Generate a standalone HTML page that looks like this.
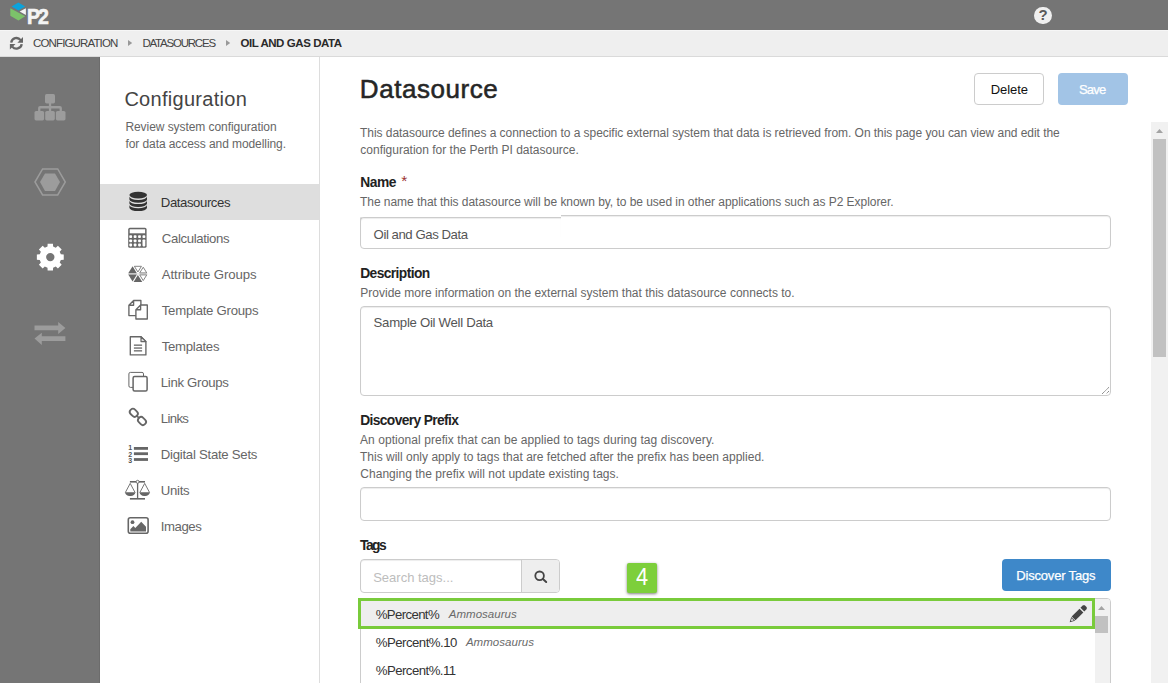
<!DOCTYPE html>
<html lang="en">
<head>
<meta charset="utf-8">
<title>Datasource - Configuration</title>
<style>
*{box-sizing:border-box;margin:0;padding:0}
html,body{width:1168px;height:683px;overflow:hidden;background:#fff}
body{font-family:"Liberation Sans",sans-serif;color:#333;position:relative}
.abs{position:absolute}
svg{position:absolute;overflow:visible}
#hdr{left:0;top:0;width:1168px;height:30px;background:#757575}
#crumb{left:0;top:30px;width:1168px;height:27px;background:#efefef;border-top:1px solid #f6f6f6;border-bottom:1px solid #dadada}
#rail{left:0;top:57px;width:100px;height:626px;background:#757575;border-right:1px solid #6c6c6c}
#side{left:100px;top:57px;width:220px;height:626px;background:#fff;border-right:1px solid #ddd}
.t{position:absolute;white-space:nowrap;line-height:1}
.req{color:#9c3331;font-weight:normal;font-size:15.5px;margin-left:5.4px;letter-spacing:0;position:relative;top:-.5px;line-height:0}
.navsel{left:100px;top:184px;width:219px;height:36px;background:#dedede}
.inp{position:absolute;left:360px;width:751px;border:1px solid #ccc;border-radius:4px;background:#fff}
</style>
</head>
<body>
<div id="hdr" class="abs"></div>
<div id="crumb" class="abs"></div>
<div id="rail" class="abs"></div>
<div id="side" class="abs"></div>
<div class="abs navsel"></div>

<!-- logo -->
<svg style="left:0;top:0" width="60" height="30" viewBox="0 0 60 30">
 <polygon points="11.6,6.6 18.4,2.6 25.2,6.6 18.4,10.5" fill="#0ba3dc"/>
 <polygon points="10.3,8.3 25.2,16.3 18.4,20.4 10.3,15.8" fill="#7cc26a"/>
 <polygon points="19.7,11.6 25.9,8.3 25.9,14.9" fill="#f4f4f4"/>
</svg>
<div class="t" id="logo" style="left:27.4px;top:6.2px;font-size:21.6px;font-weight:bold;color:#f4f4f4;-webkit-text-stroke:.7px #f4f4f4;letter-spacing:-2.1px;transform:scaleX(.9);transform-origin:0 0">P2</div>

<!-- help -->
<div class="abs" style="left:1034.3px;top:6.5px;width:17.4px;height:17.4px;border-radius:50%;background:#f0f0f0"></div>
<div class="t" id="q" style="left:1038.6px;top:7.4px;font-size:15px;font-weight:bold;color:#5a5a5a">?</div>

<!-- refresh icon -->
<svg style="left:9px;top:36px" width="15" height="15" viewBox="0 0 15 15">
 <path d="M2.2 6.6 A5.3 5.3 0 0 1 11.63 4.09" fill="none" stroke="#666" stroke-width="2.3"/>
 <polygon points="14,1.1 14,6.7 8.4,6.7" fill="#666"/>
 <path d="M12.7 8.09 A5.3 5.3 0 0 1 3.27 10.61" fill="none" stroke="#666" stroke-width="2.3"/>
 <polygon points="0.9,13.6 0.9,8 6.5,8" fill="#666"/>
</svg>
<!-- crumb arrows -->
<svg style="left:128px;top:40px" width="5" height="6" viewBox="0 0 5 6"><polygon points="0,0 4.2,3 0,6" fill="#999"/></svg>
<svg style="left:226px;top:40px" width="5" height="6" viewBox="0 0 5 6"><polygon points="0,0 4.2,3 0,6" fill="#999"/></svg>

<!-- rail icons -->
<svg style="left:0;top:57px" width="100" height="320" viewBox="0 57 100 320">
 <g fill="#9c9c9c">
  <rect x="45" y="94" width="10" height="9.4" rx="1.6"/>
  <rect x="34.5" y="111" width="9.6" height="9.4" rx="1.6"/>
  <rect x="45.2" y="111" width="9.6" height="9.4" rx="1.6"/>
  <rect x="55.9" y="111" width="9.6" height="9.4" rx="1.6"/>
  <rect x="48.9" y="102" width="2.3" height="10"/>
  <path d="M38.1 112 v-4 a2 2 0 0 1 2 -2 h19.8 a2 2 0 0 1 2 2 v4 h-2.3 v-3.6 h-19.2 v3.6z"/>
 </g>
 <polygon points="35,182 42.6,168.9 57.7,168.9 65.3,182 57.7,195 42.6,195" fill="none" stroke="#9c9c9c" stroke-width="1.5"/>
 <polygon points="40,182.1 45,173.4 55,173.4 60,182.1 55,190.9 45,190.9" fill="#9c9c9c"/>
 <path fill="#fff" fill-rule="evenodd" d="M47.51 246.56 L47.63 243.66 L52.97 243.66 L53.09 246.56 L55.77 247.67 L57.91 245.71 L61.69 249.49 L59.73 251.63 L60.84 254.31 L63.74 254.43 L63.74 259.77 L60.84 259.89 L59.73 262.57 L61.69 264.71 L57.91 268.49 L55.77 266.53 L53.09 267.64 L52.97 270.54 L47.63 270.54 L47.51 267.64 L44.83 266.53 L42.69 268.49 L38.91 264.71 L40.87 262.57 L39.76 259.89 L36.86 259.77 L36.86 254.43 L39.76 254.31 L40.87 251.63 L38.91 249.49 L42.69 245.71 L44.83 247.67Z M46.10 257.10 a4.20 4.20 0 1 0 8.40 0 a4.20 4.20 0 1 0 -8.40 0Z"/>
 <g fill="#9c9c9c">
  <polygon points="34.5,325.6 58.2,325.6 58.2,322 65.4,328 58.2,334 58.2,330.3 34.5,330.3"/>
  <polygon points="65.4,336.3 41.8,336.3 41.8,332.8 34.5,338.6 41.8,345 41.8,340.9 65.4,340.9"/>
 </g>
</svg>

<!-- sidebar icons -->
<svg style="left:120px;top:186px" width="36" height="360" viewBox="120 186 36 360">
<g fill="#333">
<ellipse cx="138.2" cy="195.1" rx="8.8" ry="3.3"/>
<path d="M129.4 196.6 a8.8 3.3 0 0 0 17.6 0 v2.8 a8.8 3.3 0 0 1 -17.6 0z"/>
<path d="M129.4 200.8 a8.8 3.3 0 0 0 17.6 0 v2.8 a8.8 3.3 0 0 1 -17.6 0z"/>
<path d="M129.4 205.0 a8.8 3.3 0 0 0 17.6 0 v2.8 a8.8 3.3 0 0 1 -17.6 0z"/>
</g>
<rect x="128.2" y="227.8" width="18.4" height="20" rx="1.6" fill="#666"/>
<rect x="129.7" y="229.3" width="15.4" height="4" fill="#fff"/>
<rect x="129.3" y="235.2" width="2.8" height="2.8" rx=".8" fill="#fff"/>
<rect x="129.3" y="239.4" width="2.8" height="2.8" rx=".8" fill="#fff"/>
<rect x="129.3" y="243.6" width="2.8" height="2.8" rx=".8" fill="#fff"/>
<rect x="133.7" y="235.2" width="2.8" height="2.8" rx=".8" fill="#fff"/>
<rect x="133.7" y="239.4" width="2.8" height="2.8" rx=".8" fill="#fff"/>
<rect x="133.7" y="243.6" width="2.8" height="2.8" rx=".8" fill="#fff"/>
<rect x="138.1" y="235.2" width="2.8" height="2.8" rx=".8" fill="#fff"/>
<rect x="138.1" y="239.4" width="2.8" height="2.8" rx=".8" fill="#fff"/>
<rect x="138.1" y="243.6" width="2.8" height="2.8" rx=".8" fill="#fff"/>
<rect x="142.5" y="235.2" width="2.8" height="2.8" rx=".8" fill="#fff"/>
<rect x="142.5" y="239.4" width="2.8" height="7" rx=".8" fill="#fff"/>
<rect x="128.4" y="273.2" width="19" height="1.4" fill="#e2e2e2"/>
<polygon points="136.91,273.35 128.24,273.35 132.58,266.37" fill="#666"/>
<polygon points="136.91,274.45 132.58,281.43 128.24,274.45" fill="#666"/>
<polygon points="137.90,274.94 142.25,281.95 133.55,281.95" fill="#666"/>
<polygon points="137.90,272.00 134.36,266.30 141.44,266.30" fill="#fff" stroke="#777" stroke-width=".9"/>
<polygon points="139.70,272.90 143.22,267.22 146.75,272.90" fill="#fff" stroke="#777" stroke-width=".9"/>
<polygon points="139.70,274.90 146.75,274.90 143.22,280.58" fill="#fff" stroke="#777" stroke-width=".9"/>
<path d="M133.6 300.5 H140.9 V315.6 H128.9 V305.2 Z M133.6 300.5 V305.2 H128.9" fill="#fff" stroke="#666" stroke-width="1.35" stroke-linejoin="round"/>
<path d="M140.6 305 H147.3 V319 H135.9 V309.7 Z M140.6 305 V309.7 H135.9" fill="#fff" stroke="#666" stroke-width="1.35" stroke-linejoin="round"/>
<path d="M130.3 336.7 H141 L145.9 341.6 V354.9 H130.3 Z" fill="#fff" stroke="#666" stroke-width="1.35" stroke-linejoin="round"/>
<path d="M141 336.7 V341.6 H145.9 Z" fill="#ddd" stroke="#666" stroke-width="1.2" stroke-linejoin="round"/>
<rect x="133.9" y="344.5" width="8.2" height="1.3" fill="#666"/>
<rect x="133.9" y="347.4" width="8.2" height="1.3" fill="#666"/>
<rect x="133.9" y="350.2" width="8.2" height="1.3" fill="#666"/>
<rect x="128.9" y="372.4" width="14.6" height="15" rx="1.5" fill="none" stroke="#666" stroke-width="1"/>
<rect x="133.1" y="376.6" width="14" height="14.3" rx="1.5" fill="#fff" stroke="#666" stroke-width="1.5"/>
<rect x="129.5" y="409.7" width="8.6" height="6.2" rx="2.9" fill="none" stroke="#666" stroke-width="1.8" transform="rotate(45 133.8 412.8)"/>
<rect x="137.7" y="417.9" width="8.6" height="6.2" rx="2.9" fill="none" stroke="#666" stroke-width="1.8" transform="rotate(45 142.0 421.0)"/>
<path d="M136.4 415.4 L139.4 418.4" stroke="#666" stroke-width="1.6"/>
<rect x="133.9" y="447.0" width="14.1" height="2.8" fill="#666"/>
<rect x="133.9" y="452.3" width="14.1" height="2.8" fill="#666"/>
<rect x="133.9" y="458.1" width="14.1" height="2.8" fill="#666"/>
<rect x="129.9" y="481" width="15.1" height="1.6" fill="#666"/>
<rect x="129.9" y="498" width="15.1" height="1.6" fill="#666"/>
<rect x="136.95" y="483" width="1.3" height="15.5" fill="#666"/>
<circle cx="137.6" cy="481.8" r="1.5" fill="#fff" stroke="#666" stroke-width=".9"/>
<path d="M125.4 492.4 L130.2 483.4 L135.0 492.4" fill="none" stroke="#666" stroke-width=".9"/>
<path d="M124.9 492.3 H135.5 Q134.2 496.4 130.2 496 Q126.2 496.4 124.9 492.3Z" fill="#666"/>
<path d="M139.9 492.4 L144.7 483.4 L149.5 492.4" fill="none" stroke="#666" stroke-width=".9"/>
<path d="M139.4 492.3 H150.0 Q148.7 496.4 144.7 496 Q140.7 496.4 139.4 492.3Z" fill="#666"/>
<rect x="128.3" y="517.7" width="19.8" height="15.6" rx="2" fill="#fff" stroke="#666" stroke-width="1.6"/>
<circle cx="132.5" cy="522.2" r="1.9" fill="#666"/>
<polygon points="130.3,531.4 130.3,529.2 133.4,526.1 135.3,528 141.2,521.8 146,526.7 146,531.4" fill="#666"/>
</svg>
<div class="t" style="left:128.2px;top:443.8px;font-size:7px;font-weight:bold;color:#555">1</div>
<div class="t" style="left:128.2px;top:450.7px;font-size:7px;font-weight:bold;color:#555">2</div>
<div class="t" style="left:128.2px;top:457.0px;font-size:7px;font-weight:bold;color:#555">3</div>

<!-- buttons -->
<div class="abs" style="left:974px;top:73px;width:70px;height:32px;border:1px solid #ccc;border-radius:4px;background:#fff"></div>
<div class="abs" style="left:1058px;top:73px;width:70px;height:32px;border-radius:4px;background:#a2c4e6"></div>

<!-- inputs -->
<div class="inp" style="top:215px;height:34px;box-shadow:inset 0 1px 1px rgba(0,0,0,.075)"></div>
<div class="abs" style="left:360px;top:214px;width:201px;height:3px;background:#fff"></div>
<div class="abs" style="left:360px;top:217px;width:201px;height:20px;border:1px solid #ccc;border-right:0;border-bottom:0;border-radius:4px 0 0 0;background:#fff;box-shadow:inset 0 1px 1px rgba(0,0,0,.075)"></div>
<div class="inp" style="top:306px;height:90px;box-shadow:inset 0 1px 1px rgba(0,0,0,.075)"></div>
<svg style="left:1099px;top:384px" width="10" height="10" viewBox="0 0 10 10"><path d="M9.7 3.5 L3.3 9.7 M9.7 7.3 L7.4 9.7" stroke="#555" stroke-width="1" stroke-dasharray="1 .6"/></svg>
<div class="inp" style="top:487px;height:34px;box-shadow:inset 0 1px 1px rgba(0,0,0,.075)"></div>
<div class="inp" style="top:559px;height:34px;width:200px;box-shadow:inset 0 1px 1px rgba(0,0,0,.075)"></div>
<div class="abs" style="left:521px;top:560px;width:38px;height:32px;background:#eee;border-left:1px solid #ccc;border-radius:0 3px 3px 0"></div>
<svg style="left:530px;top:566px" width="20" height="20" viewBox="530 566 20 20"><circle cx="539.6" cy="575.8" r="4.3" fill="none" stroke="#444" stroke-width="1.8"/><path d="M542.9 579 L546.2 582" stroke="#444" stroke-width="2" stroke-linecap="round"/></svg>

<div class="abs" style="left:626.6px;top:562.8px;width:30.5px;height:30.5px;border-radius:2px;background:#7dcf3b;box-shadow:0 1px 3px rgba(0,0,0,.5)"></div>
<div class="abs" style="left:1002px;top:559px;width:109px;height:32px;background:#3e88c9;border-radius:4px"></div>

<!-- tag list -->
<div class="abs" style="left:360px;top:598px;width:751px;height:100px;border:1px solid #ccc;border-radius:4px 4px 0 0;background:#fff;overflow:hidden">
 <div class="abs" style="left:734px;top:0;width:15px;height:100px;background:#f1f1f1"></div>
 <div class="abs" style="left:734px;top:17px;width:13px;height:17px;background:#c1c1c1"></div>
</div>
<svg style="left:1098px;top:606px" width="7" height="4" viewBox="0 0 7 4"><polygon points="0,4 3.5,0 7,4" fill="#a3a3a3"/></svg>
<div class="abs" style="left:358px;top:598px;width:737px;height:31px;border:3px solid #79cb3b;background:#eee"></div>
<svg style="left:1069px;top:605px" width="18" height="18" viewBox="0 0 18 18">
 <g fill="#444"><polygon points="0.70,17.30 2.26,11.93 6.07,15.74"/><polygon points="2.68,11.50 10.53,3.65 14.35,7.47 6.50,15.32"/><polygon points="11.45,2.73 13.92,0.26 15.76,0.26 17.74,2.24 17.74,4.08 15.27,6.55"/></g><polygon points="2.04,15.96 2.61,13.27 4.73,15.39" fill="#eee"/>
</svg>

<!-- page scrollbar -->
<div class="abs" style="left:1151px;top:122px;width:17px;height:561px;background:#f1f1f1"></div>
<div class="abs" style="left:1153px;top:139px;width:13px;height:218px;background:#c1c1c1"></div>
<svg style="left:1156px;top:129px" width="7" height="4" viewBox="0 0 7 4"><polygon points="0,4 3.5,0 7,4" fill="#a3a3a3"/></svg>
<div class="t" id="bc1" style="left:33.00px;top:37.87px;font-size:11.5px;color:#444;letter-spacing:-0.859px">CONFIGURATION</div>
<div class="t" id="bc2" style="left:142.40px;top:37.87px;font-size:11.5px;color:#444;letter-spacing:-1.216px">DATASOURCES</div>
<div class="t" id="bc3" style="left:240.40px;top:37.87px;font-size:11.5px;color:#2a2a2a;letter-spacing:-0.434px;font-weight:bold">OIL AND GAS DATA</div>
<div class="t" id="sbt" style="left:124.40px;top:89.07px;font-size:20px;color:#444;letter-spacing:0.288px">Configuration</div>
<div class="t" id="sb1" style="left:125.40px;top:120.84px;font-size:12px;color:#666;letter-spacing:-0.060px">Review system configuration</div>
<div class="t" id="sb2" style="left:125.40px;top:137.84px;font-size:12px;color:#666;letter-spacing:-0.073px">for data access and modelling.</div>
<div class="t" id="h1" style="left:359.80px;top:76.39px;font-size:26px;color:#262626;letter-spacing:0.556px;-webkit-text-stroke:.55px #262626">Datasource</div>
<div class="t" id="p1" style="left:360.00px;top:126.84px;font-size:12px;color:#666;letter-spacing:-0.045px">This datasource defines a connection to a specific external system that data is retrieved from. On this page you can view and edit the</div>
<div class="t" id="p2" style="left:360.30px;top:143.84px;font-size:12px;color:#666;letter-spacing:-0.006px">configuration for the Perth PI datasource.</div>
<div class="t" id="l1" style="left:360.20px;top:175.52px;font-size:13.8px;color:#222;letter-spacing:-0.468px;font-weight:bold">Name<span class="req">*</span></div>
<div class="t" id="hp1" style="left:360.00px;top:195.84px;font-size:12px;color:#666;letter-spacing:-0.045px">The name that this datasource will be known by, to be used in other applications such as P2 Explorer.</div>
<div class="t" id="v1" style="left:373.60px;top:228.13px;font-size:13.2px;color:#555;letter-spacing:-0.448px">Oil and Gas Data</div>
<div class="t" id="l2" style="left:360.20px;top:266.72px;font-size:13.8px;color:#222;letter-spacing:-0.587px;font-weight:bold">Description</div>
<div class="t" id="hp2" style="left:360.30px;top:287.24px;font-size:12px;color:#666;letter-spacing:0.001px">Provide more information on the external system that this datasource connects to.</div>
<div class="t" id="v2" style="left:373.60px;top:316.13px;font-size:13.2px;color:#555;letter-spacing:-0.292px">Sample Oil Well Data</div>
<div class="t" id="l3" style="left:360.20px;top:413.72px;font-size:13.8px;color:#222;letter-spacing:-0.624px;font-weight:bold">Discovery Prefix</div>
<div class="t" id="hp3" style="left:360.00px;top:433.84px;font-size:12px;color:#666;letter-spacing:0.066px">An optional prefix that can be applied to tags during tag discovery.</div>
<div class="t" id="hp4" style="left:360.00px;top:450.84px;font-size:12px;color:#666;letter-spacing:0.002px">This will only apply to tags that are fetched after the prefix has been applied.</div>
<div class="t" id="hp5" style="left:360.30px;top:467.84px;font-size:12px;color:#666;letter-spacing:0.023px">Changing the prefix will not update existing tags.</div>
<div class="t" id="l4" style="left:360.00px;top:538.72px;font-size:13.8px;color:#222;letter-spacing:-1.501px;font-weight:bold">Tags</div>
<div class="t" id="ph" style="left:373.20px;top:571.20px;font-size:13px;color:#bdbdbd;letter-spacing:0.000px">Search tags...</div>
<div class="t" id="r1" style="left:375.70px;top:607.63px;font-size:13.2px;color:#333;letter-spacing:-0.622px">%Percent%</div>
<div class="t" id="r1i" style="left:448.80px;top:609.07px;font-size:11.5px;color:#6a6a6a;letter-spacing:0.012px;font-style:italic">Ammosaurus</div>
<div class="t" id="r2" style="left:375.70px;top:635.63px;font-size:13.2px;color:#333;letter-spacing:-0.509px">%Percent%.10</div>
<div class="t" id="r2i" style="left:465.90px;top:637.07px;font-size:11.5px;color:#6a6a6a;letter-spacing:0.045px;font-style:italic">Ammosaurus</div>
<div class="t" id="r3" style="left:375.70px;top:663.63px;font-size:13.2px;color:#333;letter-spacing:-0.529px">%Percent%.11</div>
<div class="t" id="bdisc" style="left:1016.30px;top:569.00px;font-size:13px;color:#fff;letter-spacing:-0.186px;-webkit-text-stroke:.25px #fff">Discover Tags</div>
<div class="t" id="bdel" style="left:990.70px;top:83.00px;font-size:13px;color:#111;letter-spacing:-0.070px">Delete</div>
<div class="t" id="bsave" style="left:1079.00px;top:83.00px;font-size:13px;color:#fff;letter-spacing:-0.800px;-webkit-text-stroke:.25px #fff">Save</div>
<div class="t" id="b4" style="left:635.60px;top:564.91px;font-size:24.2px;color:#fff;letter-spacing:0.000px;transform:scaleX(.9);transform-origin:0 0">4</div>
<div class="t" id="n0" style="left:160.80px;top:196.13px;font-size:13.2px;color:#333;letter-spacing:-0.434px">Datasources</div>
<div class="t" id="n1" style="left:161.80px;top:232.13px;font-size:13.2px;color:#666;letter-spacing:-0.377px">Calculations</div>
<div class="t" id="n2" style="left:161.80px;top:268.13px;font-size:13.2px;color:#666;letter-spacing:-0.082px">Attribute Groups</div>
<div class="t" id="n3" style="left:161.80px;top:304.13px;font-size:13.2px;color:#666;letter-spacing:-0.266px">Template Groups</div>
<div class="t" id="n4" style="left:161.80px;top:340.13px;font-size:13.2px;color:#666;letter-spacing:-0.301px">Templates</div>
<div class="t" id="n5" style="left:160.80px;top:376.13px;font-size:13.2px;color:#666;letter-spacing:-0.311px">Link Groups</div>
<div class="t" id="n6" style="left:160.80px;top:412.13px;font-size:13.2px;color:#666;letter-spacing:-0.673px">Links</div>
<div class="t" id="n7" style="left:160.80px;top:448.13px;font-size:13.2px;color:#666;letter-spacing:-0.268px">Digital State Sets</div>
<div class="t" id="n8" style="left:160.80px;top:484.13px;font-size:13.2px;color:#666;letter-spacing:-0.313px">Units</div>
<div class="t" id="n9" style="left:160.80px;top:520.13px;font-size:13.2px;color:#666;letter-spacing:-0.450px">Images</div>
</body>
</html>
